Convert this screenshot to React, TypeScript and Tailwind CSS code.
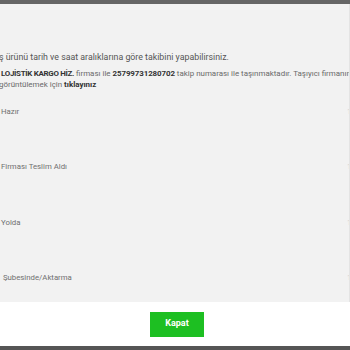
import React from "react";

const rows = [
  { pre: "", label: "Hazır", date: "12.05.2023 10:21" },
  { pre: "", label: "Firması Teslim Aldı", date: "12.05.2023 16:40" },
  { pre: "", label: "Yolda", date: "13.05.2023 02:12" },
  { pre: "ı ", label: "Şubesinde/Aktarma", date: "13.05.2023 08:05" },
];

export default function App() {
  return (
    <div
      className="w-[350px] h-[350px] overflow-hidden flex flex-col bg-[#f2f2f2]"
      style={{ fontFamily: "Roboto, 'Noto Sans', Arial, sans-serif" }}
    >
      <div className="h-[4px] bg-[#666666] shrink-0" />
      <div className="flex-1 bg-[#f2f2f2] overflow-hidden pt-[46px] border-r border-[#e4e4e4]">
        <div className="text-[8.8px] leading-[14px] text-[#555555] whitespace-nowrap -ml-[1px]">
          ş ürünü tarih ve saat aralıklarına göre takibini yapabilirsiniz.
        </div>
        <div className="mt-[3.5px] text-[7.95px] leading-[11px] text-[#6a6a6a] whitespace-nowrap">
          <div className="ml-[1px]">
            <span className="font-bold text-[#333333] tracking-[-0.3px]">LOJİSTİK KARGO HİZ.</span> firması ile{" "}
            <span className="font-bold text-[#333333] tracking-[-0.1px]">25799731280702</span> takip numarası ile taşınmaktadır. Taşıyıcı firmanın
          </div>
          <div className="-ml-[1px]">
            görüntülemek için <span className="font-bold text-[#333333]">tıklayınız</span>
          </div>
        </div>
        <div className="mt-[16px]">
          {rows.map((r) => (
            <div key={r.label} className="h-[55.5px] flex text-[7.8px] leading-[11px] text-[#707070] whitespace-nowrap">
              <div className="w-[347px] shrink-0">
                {r.pre ? <span className="-ml-[2px]">{r.pre}</span> : null}
                <span className="ml-[1px]">{r.label}</span>
              </div>
              <div className="shrink-0 text-[#d0d0d0]">{r.date}</div>
            </div>
          ))}
        </div>
      </div>
      <div className="h-[44px] shrink-0 bg-white flex items-center justify-center">
        <button className="ml-[4px] w-[54px] h-[25px] bg-[#1dbf22] text-white text-[9px] font-bold flex items-center justify-center">
          Kapat
        </button>
      </div>
      <div className="h-[4px] shrink-0 bg-[#555555]" />
    </div>
  );
}
